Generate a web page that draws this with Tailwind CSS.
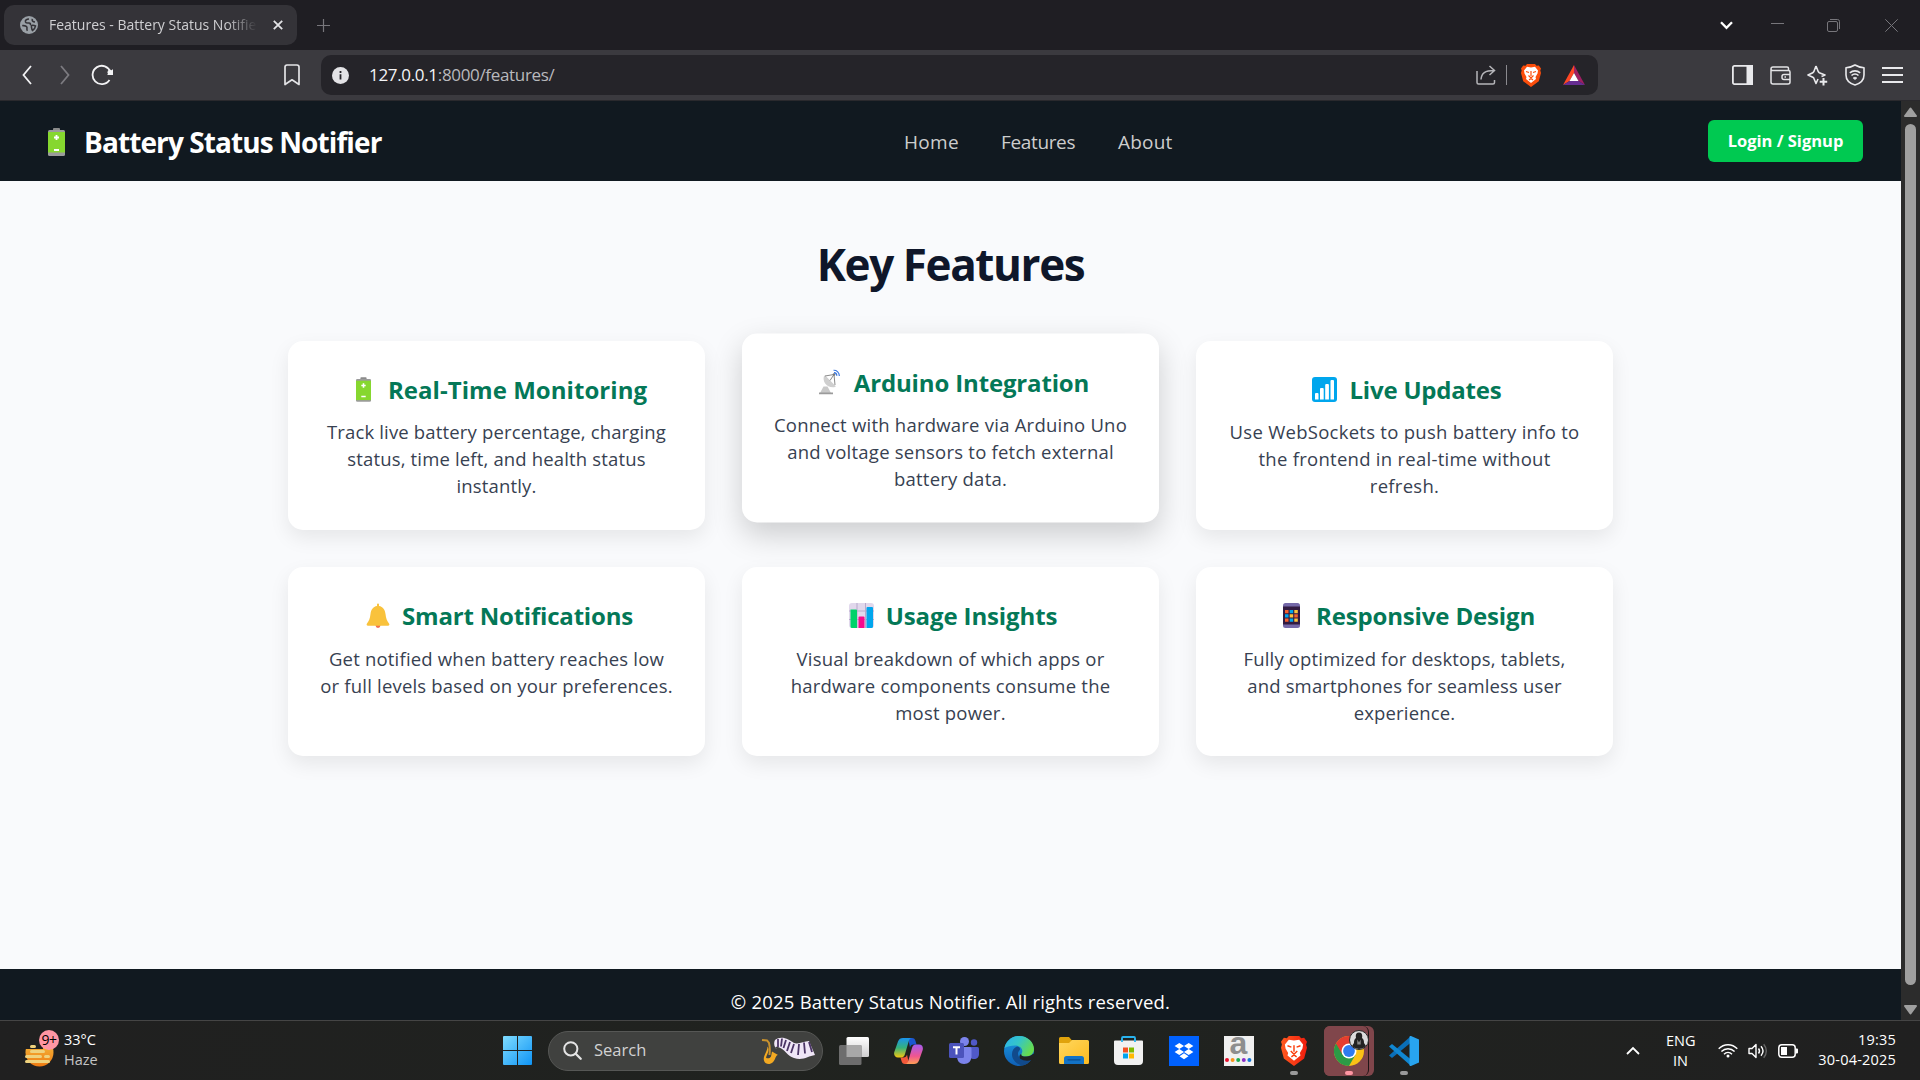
<!DOCTYPE html>
<html lang="en">
<head>
<meta charset="utf-8">
<title>Features - Battery Status Notifier</title>
<script src="https://cdn.jsdelivr.net/npm/@tailwindcss/browser@4"></script>
</head>
<body class="w-[1920px] h-[1080px] overflow-hidden bg-[#202020] font-['Open_Sans',sans-serif] flex flex-col">

<!-- Tab strip -->
<div class="h-[50px] shrink-0 bg-[#1f1e23] flex items-center">
  <div class="ml-1 w-[293px] h-10 rounded-[10px] bg-[#343338] flex items-center pl-4">
    <svg class="size-[18px] shrink-0" viewBox="0 0 18 18"><circle cx="9" cy="9" r="9" fill="#9aa0a6"/><path d="M9 3C6.500 3 5 4.500 5.500 6c.5 1.300 2 1 3.500 1s1.800 1 1 2M2.200 9.500c1.500.3 3.500 0 4.500 1.300 1 1.200-.7 2.500.8 4M12.500 3c-.8 1.500 0 2.800 2.500 3M11.500 9.500c1.500-.5 3 0 4 .5-.3 2-1.300 3.500-3 4.500-1-1-.5-2-1-3z" fill="none" stroke="#343338" stroke-width="1.600"/></svg>
    <div class="ml-[11px] mb-[2px] w-[208px] overflow-hidden whitespace-nowrap text-[14px] text-[#cfcfd2] [mask-image:linear-gradient(to_right,black_85%,transparent)]">Features - Battery Status Notifier</div>
    <svg class="ml-4 size-[10px]" viewBox="0 0 10 10"><path d="M.8.8l8.400 8.400M9.200.8L.8 9.200" stroke="#e3e3e6" stroke-width="1.800"/></svg>
  </div>
  <svg class="ml-5 size-[13px]" viewBox="0 0 13 13"><path d="M6.500 0v13M0 6.500h13" stroke="#77767b" stroke-width="1.200"/></svg>
  <svg class="ml-[1390px] w-[13px] h-[9px]" viewBox="0 0 13 9"><path d="M1 1.200l5.500 5.600L12 1.200" fill="none" stroke="#fff" stroke-width="2.300"/></svg>
  <div class="ml-[38px] mb-[3px] w-[13px] h-px bg-[#77767b]"></div>
  <svg class="ml-[43px] size-[13px]" viewBox="0 0 13 13" fill="none" stroke="#77767b"><rect x=".5" y="2.500" width="10" height="10" rx="1.500"/><path d="M3 .5h7.500a2 2 0 0 1 2 2V10"/></svg>
  <svg class="ml-[45px] size-[13px]" viewBox="0 0 13 13"><path d="M.3.3l12.400 12.400M12.700.3L.3 12.700" stroke="#77767b" stroke-width="1"/></svg>
</div>

<!-- Toolbar -->
<div class="h-[51px] shrink-0 bg-[#3b3a3f] border-b border-[#2a292d] flex items-center">
  <svg class="ml-[22px] w-[10px] h-[20px]" viewBox="0 0 10 20"><path d="M9 1L1.500 10 9 19" fill="none" stroke="#f2f2f4" stroke-width="1.800"/></svg>
  <svg class="ml-[28px] w-[10px] h-[20px]" viewBox="0 0 10 20"><path d="M1 1l7.500 9L1 19" fill="none" stroke="#7c7b80" stroke-width="1.800"/></svg>
  <svg class="ml-[21px] w-[23px] h-[22px]" viewBox="0 0 23 22"><path d="M19.500 8A9.200 9.200 0 1 0 18.500 16" fill="none" stroke="#f2f2f4" stroke-width="1.800"/><circle cx="19" cy="8.300" r="2.500" fill="#f2f2f4"/><path d="M22 5v6h-6z" fill="#f2f2f4"/></svg>
  <svg class="ml-[170px] w-[16px] h-[22px]" viewBox="0 0 16 22"><path d="M1 3.200A2 2 0 0 1 3 1h10a2 2 0 0 1 2 2.200V20.500l-7-4.700-7 4.700z" fill="none" stroke="#e3e3e6" stroke-width="1.700" stroke-linejoin="round"/></svg>
  <div class="ml-[21px] w-[1277px] h-10 rounded-[10px] bg-[#252429] flex items-center">
    <svg class="ml-[11px] size-[17px]" viewBox="0 0 17 17"><circle cx="8.500" cy="8.500" r="8.500" fill="#e3e3e6"/><path d="M8.500 7.200v5.300M8.500 4v1.900" stroke="#252429" stroke-width="1.800"/></svg>
    <div class="ml-5 w-[1107px] whitespace-nowrap text-[17px] tracking-[-0.33px] text-[#b9b9bd]"><span class="text-[#f4f4f6]">127.0.0.1</span>:8000/features/</div>
    <svg class="w-[20px] h-[20px]" viewBox="0 0 20 20" fill="none" stroke="#b5b5b9" stroke-width="1.500"><path d="M1 6v11.500a1.500 1.500 0 0 0 1.500 1.500H17a1.500 1.500 0 0 0 1.500-1.500V15M5 14.500C5.500 8 9 5.500 18 5.500M13.500 1L18.500 5.500 13.500 10"/></svg>
    <div class="ml-[10px] w-px h-5 bg-[#8b8a8f]"></div>
    <svg class="ml-[14px] w-[20px] h-[23px]" viewBox="0 0 20 23"><path d="M6 0h8l1.500 1.700 2.300-.3L20 4.500l-.7 2L20 9l-2.200 8.200L10 23l-7.800-5.800L0 9l.7-2.500L0 4.500l2.200-3.100 2.300.3z" fill="#fb4d0b"/><path d="M10 3.500l4-.7 3 3.700-.5 3-2 3.500.5 2L10 19l-5-4 .5-2-2-3.500-.5-3 3-3.700z" fill="#fff"/><path d="M5 7.500l3 1M15 7.500l-3 1M10 7v5M7.500 11.500L10 14l2.500-2.500M8 16l2-1.500 2 1.500" stroke="#fb4d0b" stroke-width="1.200" fill="none"/></svg>
    <svg class="ml-[22px] w-[22px] h-[20px]" viewBox="0 0 22 20"><path d="M11 0v8L6.500 16 0 20z" fill="#ff4724"/><path d="M11 0l11 20-6.500-4L11 8z" fill="#9e1f63"/><path d="M0 20l6.500-4h9l6.500 4z" fill="#662d91"/><path d="M11 8l4.500 8h-9z" fill="#fff"/></svg>
  </div>
  <svg class="ml-[134px] w-[21px] h-[20px]" viewBox="0 0 21 20"><rect x=".9" y=".9" width="19.200" height="18.200" rx="1.500" fill="none" stroke="#e9e9ec" stroke-width="1.800"/><path d="M14.500 0H21v20h-6.500z" fill="#e9e9ec"/></svg>
  <svg class="ml-[17px] w-[21px] h-[19px]" viewBox="0 0 21 19" fill="none" stroke="#e3e3e6" stroke-width="1.500"><path d="M1 3v13a2 2 0 0 0 2 2h15a2 2 0 0 0 2-2V6a1.500 1.500 0 0 0-1.500-1.500H2.500A1.500 1.500 0 0 1 1 3 2 2 0 0 1 3 1h14a1.500 1.500 0 0 1 1.500 1.500v2"/><path d="M20 8.500h-6a2 2 0 0 0-2 2v1a2 2 0 0 0 2 2h6M14.500 11h1.500"/></svg>
  <svg class="ml-[16px] w-[21px] h-[21px]" viewBox="0 0 21 21" fill="none" stroke="#e9e9ec" stroke-width="1.600" stroke-linejoin="round"><path d="M9 1l2.300 5.700a2 2 0 0 0 1 1L18 10l-3.500 1.500M9 1L6.800 6.700a2 2 0 0 1-1 1L1 10l4.800 2.200a2 2 0 0 1 1 1L9 18.500l2-4.500"/><path d="M16.500 13v7.500M12.700 16.800h7.500" stroke-width="2"/></svg>
  <svg class="ml-[17px] w-[20px] h-[22px]" viewBox="0 0 20 22" fill="none" stroke="#e9e9ec" stroke-width="1.600"><path d="M10 1c3 1.800 6 2.600 9 2.800V11c0 5-4 8.500-9 10-5-1.500-9-5-9-10V3.800C4 3.600 7 2.800 10 1z" stroke-linejoin="round"/><path d="M4.800 8.800c3-2.600 7.400-2.600 10.400 0M6.500 11.500c2-1.800 5-1.800 7 0"/><path d="M8.200 14c1-.9 2.600-.9 3.600 0L10 15.500z" fill="#e9e9ec" stroke-width=".8"/></svg>
  <svg class="ml-[17px] w-[21px] h-[16px]" viewBox="0 0 21 16"><path d="M0 1h21M0 8h21M0 15h21" stroke="#e9e9ec" stroke-width="1.800"/></svg>
</div>

<!-- Page -->
<div class="h-[919px] shrink-0 flex">
  <div class="w-[1901px] flex flex-col bg-[#f9fafc]">
    <header class="h-20 shrink-0 bg-[#111920] flex items-center">
      <svg class="ml-[48px] mt-[2px] w-[17px] h-[28px]" viewBox="0 0 17 28"><rect x="5" width="7" height="4" rx="1" fill="#8b8b8b"/><rect y="2" width="17" height="26" rx="1.500" fill="#9b9b9b"/><path d="M0 4h17v20.500H0z" fill="#86d72f"/><path d="M8.500 7v5M6 9.500h5M6 22h5" stroke="#fff" stroke-width="1.800"/></svg>
      <div class="ml-[19px] mt-[2px] w-[820px] whitespace-nowrap text-[28px] tracking-[-0.9px] font-bold text-white">Battery Status Notifier</div>
      <nav class="mt-[2px] w-[804px] flex text-[19px] text-[#cdcdcd]"><a class="w-[97px] tracking-[0.3px]">Home</a><a class="w-[117px] tracking-[-0.35px]">Features</a><a class="tracking-[0.2px]">About</a></nav>
      <a class="w-[155px] h-[42px] mb-px pt-[2px] rounded-md bg-[#00c951] text-white font-bold text-[16.5px] flex items-center justify-center whitespace-nowrap">Login / Signup</a>
    </header>

    <main class="h-[788px] shrink-0">
      <h1 class="mt-[53px] h-[60px] leading-[60px] text-center text-[44px] tracking-[-1.4px] font-bold text-[#0f172a]">Key Features</h1>
      <div class="mt-[47px] ml-[288px] grid grid-cols-[417px_417px_417px] grid-rows-[189px_189px] gap-[37px] text-center text-[18.5px] leading-[27px] text-[#374151]">
        <section class="rounded-[15px] bg-white shadow-[0_8px_20px_rgba(0,0,0,0.08)] pt-[30px]">
          <h2 class="flex justify-center items-center h-9 gap-[7px] text-[24px] tracking-[0.05px] font-bold text-[#047857]">
            <span class="w-[35px] flex justify-center"><svg class="w-[15px] h-[25px]" viewBox="0 0 17 28"><rect x="5" width="7" height="4" rx="1" fill="#8b8b8b"/><rect y="2" width="17" height="26" rx="1.500" fill="#9b9b9b"/><path d="M0 4h17v22H0z" fill="#86d72f"/><path d="M8.500 7v5M6 9.500h5M6 22h5" stroke="#fff" stroke-width="1.800"/></svg></span>Real-Time Monitoring</h2>
          <p class="mt-[11px] whitespace-nowrap tracking-[0.16px]">Track live battery percentage, charging<br>status, time left, and health status<br>instantly.</p>
        </section>
        <section class="-translate-y-[7.500px] rounded-[15px] bg-white shadow-[0_12px_30px_rgba(0,0,0,0.18)] pt-[30px]">
          <h2 class="flex justify-center items-center h-9 gap-[7px] text-[24px] tracking-[-0.15px] font-bold text-[#047857]">
            <span class="w-[35px] flex justify-center"><svg class="w-[21px] h-[25px]" viewBox="0 0 21 25"><path d="M1 23.500l3.500-6.500h4l3.500 6.500z" fill="#c9c9c9"/><path d="M0 23h14v2H0z" fill="#9b9b9b"/><path d="M5 6.500C3 12 8 19 16 17.500c.8-.3.800-.8.300-1.300L6.500 6.200C6 5.700 5.300 5.900 5 6.500z" fill="#cfcfcf"/><path d="M6 6.500l9-1.500 1 10.500M11 11l4-6" stroke="#8a8a8a" fill="none"/><circle cx="15" cy="5" r="1.300" fill="#777"/><path d="M15 3.200a3 3 0 0 1 2.800 3M14.500.7A5.500 5.500 0 0 1 20.300 6.500" stroke="#3b78e0" fill="none" stroke-width="1.200"/></svg></span>Arduino Integration</h2>
          <p class="mt-[11px] whitespace-nowrap tracking-[0.23px]">Connect with hardware via Arduino Uno<br>and voltage sensors to fetch external<br>battery data.</p>
        </section>
        <section class="rounded-[15px] bg-white shadow-[0_8px_20px_rgba(0,0,0,0.08)] pt-[30px]">
          <h2 class="flex justify-center items-center h-9 gap-[7px] text-[24px] tracking-[-0.2px] font-bold text-[#047857]">
            <span class="w-[35px] flex justify-center"><svg class="size-[25px]" viewBox="0 0 25 25"><rect width="25" height="25" rx="3" fill="#00a6ed"/><path d="M3 17a1 1 0 0 1 1-1h1.500a1 1 0 0 1 1 1v5.500H3zM8 12a1 1 0 0 1 1-1h1.700a1 1 0 0 1 1 1v10.500H8zM13.200 8a1 1 0 0 1 1-1h1.700a1 1 0 0 1 1 1v14.500h-3.700zM18.500 4a1 1 0 0 1 1-1H21a1 1 0 0 1 1 1v18.500h-3.500z" fill="#fff"/></svg></span>Live Updates</h2>
          <p class="mt-[11px] whitespace-nowrap tracking-[0.27px]">Use WebSockets to push battery info to<br>the frontend in real-time without<br>refresh.</p>
        </section>
        <section class="rounded-[15px] bg-white shadow-[0_8px_20px_rgba(0,0,0,0.08)] pt-[30px]">
          <h2 class="flex justify-center items-center h-9 gap-[7px] text-[24px] tracking-[-0.2px] font-bold text-[#047857]">
            <span class="w-[35px] flex justify-center"><svg class="w-[24px] h-[25px]" viewBox="0 0 24 25"><circle cx="12" cy="22.500" r="2.400" fill="#f3704f"/><path d="M11 1.500a1 1 0 0 1 2 0V3c4 .6 6 3.800 6.500 8 .5 4.500 1.500 7 3.500 9.500.8 1.200.3 2.300-1 2.300H2c-1.300 0-1.800-1.100-1-2.300 2-2.500 3-5 3.500-9.500C5 6.800 7 3.600 11 3z" fill="#f9c23c"/></svg></span>Smart Notifications</h2>
          <p class="mt-[12px] whitespace-nowrap tracking-[0.19px]">Get notified when battery reaches low<br>or full levels based on your preferences.</p>
        </section>
        <section class="rounded-[15px] bg-white shadow-[0_8px_20px_rgba(0,0,0,0.08)] pt-[30px]">
          <h2 class="flex justify-center items-center h-9 gap-[7px] text-[24px] tracking-[-0.12px] font-bold text-[#047857]">
            <span class="w-[35px] flex justify-center"><svg class="size-[25px]" viewBox="0 0 25 25"><rect width="25" height="25" rx="3" fill="#e1d8ec"/><path d="M8 0v25M16.500 0v25M0 8h25M0 16.500h25" stroke="#b8a9cc" stroke-width="1"/><path d="M1.500 6.500H7a1 1 0 0 1 1 1V25H3a1.500 1.500 0 0 1-1.500-1.500z" fill="#00d26a"/><path d="M10.500 13.500h4a1 1 0 0 1 1 1V25h-6V14.500a1 1 0 0 1 1-1z" fill="#f70a8d"/><path d="M18.500 4H23a1 1 0 0 1 1 1v18.500a1.500 1.500 0 0 1-1.500 1.500h-5V5a1 1 0 0 1 1-1z" fill="#00a6ed"/></svg></span>Usage Insights</h2>
          <p class="mt-[12px] whitespace-nowrap tracking-[0.22px]">Visual breakdown of which apps or<br>hardware components consume the<br>most power.</p>
        </section>
        <section class="rounded-[15px] bg-white shadow-[0_8px_20px_rgba(0,0,0,0.08)] pt-[30px]">
          <h2 class="flex justify-center items-center h-9 gap-[7px] text-[24px] tracking-[-0.15px] font-bold text-[#047857]">
            <span class="w-[35px] flex justify-center"><svg class="w-[17px] h-[25px]" viewBox="0 0 17 25"><rect width="17" height="25" rx="2.500" fill="#7468a8"/><path d="M0 3.500h17v18H0z" fill="#321b41"/><path d="M2 7h3.500v3.300H2zM2 15.500h3.500v3.300H2zM11.300 11.300h3.500v3.300h-3.500z" fill="#f8602d"/><path d="M6.700 7h3.500v3.300H6.700zM2 11.300h3.500v3.300H2zM6.700 15.500h3.500v3.300H6.700z" fill="#00a6ed"/><path d="M11.300 7h3.500v3.300h-3.500zM6.700 11.300h3.500v3.300H6.700zM11.300 15.500h3.500v3.300h-3.500z" fill="#fcc53c"/></svg></span>Responsive Design</h2>
          <p class="mt-[12px] whitespace-nowrap tracking-[0.16px]">Fully optimized for desktops, tablets,<br>and smartphones for seamless user<br>experience.</p>
        </section>
      </div>
    </main>

    <footer class="flex-1 bg-[#111920] text-white text-center text-[18.5px] tracking-[0.21px] leading-[66px] overflow-hidden">© 2025 Battery Status Notifier. All rights reserved.</footer>
  </div>
  <!-- Scrollbar -->
  <div class="w-[19px] bg-[#2c2c2c] flex flex-col items-center">
    <svg class="mt-[6px] w-[13px] h-[10px]" viewBox="0 0 13 10"><path d="M6.500 1.500L12 9H1z" fill="#9f9f9f" stroke="#9f9f9f" stroke-width="2" stroke-linejoin="round"/></svg>
    <div class="mt-[7px] w-[11px] h-[861px] rounded-full bg-[#9f9f9f]"></div>
    <svg class="mt-5 w-[13px] h-[10px]" viewBox="0 0 13 10"><path d="M6.500 8.500L12 1H1z" fill="#9f9f9f" stroke="#9f9f9f" stroke-width="2" stroke-linejoin="round"/></svg>
  </div>
</div>

<!-- Taskbar -->
<div class="h-[60px] shrink-0 border-t border-[#454545] bg-linear-to-r from-[#202020] via-[#20231f] to-[#202020] flex items-center text-white whitespace-nowrap">
  <div class="ml-[25px] w-[34px] h-9 relative">
    <svg class="w-[34px] h-9" viewBox="0 0 34 36"><defs><linearGradient id="sun" x1="0" y1="0" x2="0" y2="1"><stop offset="0" stop-color="#f6c443"/><stop offset="1" stop-color="#ee7a12"/></linearGradient></defs><circle cx="14.500" cy="19.500" r="14" fill="url(#sun)"/><path d="M0 3h18v13H0z" fill="#202020"/><path d="M6.500 13.500h3M6.500 18.500h12M1.500 23.500h14M20.500 23.500h3M1.500 28.500h22" stroke="#efd27d" stroke-width="3" stroke-linecap="round"/></svg>
    <div class="absolute left-[14px] -top-[3px] size-5 rounded-full bg-[#ff96a3] text-black text-[14px] leading-5 text-center tracking-[-0.5px]">9+</div>
  </div>
  <div class="ml-[5px] w-[422px] text-[14.5px] leading-5 pb-px"><div>33°C</div><div class="text-[#c4c4c4]">Haze</div></div>

  <svg class="ml-[17px] size-[29px]" viewBox="0 0 29 29"><defs><linearGradient id="win" x1="0" y1="0" x2="1" y2="1"><stop offset="0" stop-color="#7fdcff"/><stop offset="1" stop-color="#0f94f5"/></linearGradient></defs><path d="M1 0h13v14H0V1a1 1 0 0 1 1-1zM15 0h13a1 1 0 0 1 1 1v13H15zM0 15h14v14H1a1 1 0 0 1-1-1zM15 15h14v13a1 1 0 0 1-1 1H15z" fill="url(#win)"/></svg>

  <div class="ml-4 w-[275px] h-10 rounded-full bg-[#40413f] border border-[#565755] flex items-center">
    <svg class="ml-[14px] size-[19px]" viewBox="0 0 19 19"><circle cx="7.800" cy="7.800" r="6.600" fill="none" stroke="#e4e4e4" stroke-width="2"/><path d="M12.700 12.700l5 5" stroke="#e4e4e4" stroke-width="2.300" stroke-linecap="round"/></svg>
    <div class="ml-[12px] w-[167px] text-[16.500px] text-[#d2d2d2]">Search</div>
    <svg class="w-[56px] h-7" viewBox="0 0 56 28"><path d="M1 3l5 .5 2 2.500c1 4 1 8 .5 12" fill="none" stroke="#c9922e" stroke-width="2"/><path d="M6.500 9.500c2.500 3 0 7-1.500 11 1 1.500 4 1 5-1l1-5 6 3.500c-3 0-2.500 8-8.500 9-5 .5-7-4-5-8.500 1.500-3.500 3-6 3-9z" fill="#f3a922"/><path d="M14 3c6-5 14-1 19 3 4.500 1.500 10-1.500 15-2l6 14c-7 1-12 6-21 3-7-2-9-9-16-11-3-1-3 2-1 2-2-1-4-5-2-9z" fill="#efe6f7"/><path d="M17 2v8M21 1.500l-1 8M25 3l-2.500 8M29 5l-3 9M33 7l-3 9M38 7l-1 11M43 5.500l1 11M48 5l3 10" stroke="#4b3566" stroke-width="1.800"/></svg>
  </div>

  <div class="ml-[3px] flex items-center h-full">
    <div class="w-[55px] flex justify-center"><svg class="w-[30px] h-[28px]" viewBox="0 0 30 28"><defs><linearGradient id="tv" x1="0" y1="0" x2="0" y2="1"><stop offset="0" stop-color="#fff"/><stop offset="1" stop-color="#cfcfcf"/></linearGradient></defs><rect x="7.500" width="22.500" height="20" rx="1.500" fill="url(#tv)"/><rect y="8" width="22.500" height="20" rx="1.500" fill="#6d6d6d"/><path d="M7.500 8h15v12h-15z" fill="#a8a8a8"/></svg></div>
    <div class="w-[55px] flex justify-center"><svg class="w-[29px] h-[26px]" viewBox="0 0 29 26"><defs><linearGradient id="cp1" x1="0" y1="0" x2="0" y2="1"><stop offset="0" stop-color="#1a94ee"/><stop offset=".5" stop-color="#35b27c"/><stop offset="1" stop-color="#f5c80f"/></linearGradient><linearGradient id="cp2" x1="0" y1="0" x2="0" y2="1"><stop offset="0" stop-color="#a55bf0"/><stop offset=".6" stop-color="#f0568f"/><stop offset="1" stop-color="#ff9f55"/></linearGradient></defs><path d="M14 0h4c2 0 3 1 3.500 3l1 3.500h-3c-2 0-3 1-3.500 3z" fill="#1b57d0"/><path d="M15 26h-4c-2 0-3-1-3.500-3l-1-3.500h3c2 0 3-1 3.500-3z" fill="#f2593a"/><path d="M9 0h9c-2 0-2.800 1.500-3.500 4l-3.500 12c-.7 2.200-1.500 3.500-4 3.500H4C1 19.500-.5 17 .3 14L4 3.500C5 1 6.500 0 9 0z" fill="url(#cp1)"/><path d="M20 26h-9c2 0 2.800-1.500 3.500-4L18 10c.7-2.200 1.500-3.500 4-3.500h3c3 0 4.500 2.500 3.700 5.500L25 22.500c-1 2.500-2.500 3.500-5 3.500z" fill="url(#cp2)"/></svg></div>
    <div class="w-[55px] flex justify-center"><svg class="w-[30px] h-[27px]" viewBox="0 0 30 27"><circle cx="15.500" cy="4.500" r="4.500" fill="#7b83eb"/><circle cx="25" cy="5.500" r="3.200" fill="#5059c9"/><path d="M20 10h8.500a1.500 1.500 0 0 1 1.500 1.500V17c0 3-2 5-5 5s-5-2-5-5z" fill="#5059c9"/><path d="M8 10h13a1.500 1.500 0 0 1 1.500 1.500V19c0 5-3 8-7.500 8s-7-3-7-8z" fill="#7b83eb"/><rect y="6" width="15" height="15" rx="1.500" fill="#4b53bc"/><path d="M4 10.200h7M7.500 10.200v7.300" stroke="#fff" stroke-width="2"/></svg></div>
    <div class="w-[55px] flex justify-center"><svg class="size-[30px]" viewBox="0 0 30 30"><defs><linearGradient id="ed1" x1="0" y1="0" x2="1" y2=".5"><stop offset="0" stop-color="#2bb1ee"/><stop offset=".5" stop-color="#35c5c8"/><stop offset="1" stop-color="#66dc4e"/></linearGradient><linearGradient id="ed2" x1="0" y1="0" x2="0" y2="1"><stop offset="0" stop-color="#1b9de2"/><stop offset="1" stop-color="#0f5fb5"/></linearGradient></defs><circle cx="15" cy="15" r="15" fill="url(#ed2)"/><path d="M.5 12C2 5 8 0 15 0c9 0 15 6.500 15 13 0 5-4 7.500-8 7.500-4 0-5.500-1.200-4.500-2.700 2.500-4-1-8.300-6.500-8.300-4 0-8 1-10.500 2.500z" fill="url(#ed1)"/><path d="M13 10.500c-5 2-6.500 8-3.500 13 2 3.500 6 5.800 9.500 6 4-1 7-3.500 8.700-6.700-5 2.500-11 1.200-13-2.300-1.500-3-.5-4.500 1-6.500 1-1.500-.5-3.500-2.700-3.500z" fill="#114a8b"/><path d="M17.500 17.800c-1 1.500.5 2.700 4.500 2.700 3 0 5.500-1 7.500-3l1.500 2-3 4.500c-4.500 1.500-9 .7-11.800-1.200-1.500-2-.5-4 1.300-5z" fill="#202220"/></svg></div>
    <div class="w-[55px] flex justify-center"><svg class="w-[30px] h-[27px]" viewBox="0 0 30 27"><defs><linearGradient id="fo" x1="0" y1="0" x2="1" y2="1"><stop offset="0" stop-color="#ffd75e"/><stop offset="1" stop-color="#fdbb1f"/></linearGradient></defs><path d="M1.500 0H10l3 3.500V8H0V1.500A1.500 1.500 0 0 1 1.500 0z" fill="#e0a30c"/><path d="M0 6h10l3-3h15.500A1.500 1.500 0 0 1 30 4.500v21a1.500 1.500 0 0 1-1.500 1.500h-27A1.500 1.500 0 0 1 0 25.500z" fill="url(#fo)"/><path d="M5 21.500a2.500 2.500 0 0 1 2.500-2.500h15a2.500 2.500 0 0 1 2.500 2.500V27H5z" fill="#1373c6"/><path d="M9 22.800h12" stroke="#0b4f90" stroke-width="1.300" stroke-linecap="round"/></svg></div>
    <div class="w-[55px] flex justify-center"><svg class="w-[29px] h-[29px]" viewBox="0 0 29 29"><path d="M8 6V2a1 1 0 0 1 1-1h11a1 1 0 0 1 1 1v4" fill="none" stroke="#29b3ee" stroke-width="1.800"/><path d="M0 5.500A1 1 0 0 1 1 4.500h27a1 1 0 0 1 1 1V25a4 4 0 0 1-4 4H4a4 4 0 0 1-4-4z" fill="#f1f1f1"/><path d="M8 2.500V6M21 2.500V6" stroke="#29b3ee" stroke-width="1.800"/><path d="M9 11.500h5v5H9z" fill="#f25022"/><path d="M15 11.500h5v5h-5z" fill="#7fba00"/><path d="M9 17.500h5v5H9z" fill="#00a4ef"/><path d="M15 17.500h5v5h-5z" fill="#ffb900"/></svg></div>
    <div class="w-[55px] flex justify-center"><svg class="size-[30px]" viewBox="0 0 30 30"><path d="M0 0h30v30H0z" fill="#0061fe"/><path d="M10.300 7l4.700 3-4.700 3-4.700-3zM19.700 7l4.700 3-4.700 3-4.700-3zM10.300 13l4.700 3-4.700 3-4.700-3zM19.700 13l4.700 3-4.700 3-4.700-3zM15 17.300l4.500 3L15 23.200l-4.500-2.900z" fill="#fff"/></svg></div>
    <div class="w-[55px] flex justify-center"><div class="size-[30px] bg-[#f0f0f0] flex flex-col items-center"><div class="h-[22.500px] leading-[15px] text-[32px] font-bold text-[#8e8e8e] font-['Liberation_Sans',sans-serif]">a</div><svg class="w-[27px] h-1" viewBox="0 0 27 4"><circle cx="2" cy="2" r="2" fill="#e8112d"/><circle cx="7.600" cy="2" r="2" fill="#f7941d"/><circle cx="13.200" cy="2" r="2" fill="#1cab50"/><circle cx="18.800" cy="2" r="2" fill="#8a2fc9"/><circle cx="24.400" cy="2" r="2" fill="#1476d6"/></svg></div></div>
    <div class="w-[55px] h-[50px] relative flex justify-center items-center"><svg class="w-[26px] h-[30px]" viewBox="0 0 20 23" preserveAspectRatio="none"><defs><linearGradient id="br"><stop offset="0" stop-color="#ff5a1f"/><stop offset="1" stop-color="#f01c0d"/></linearGradient></defs><path d="M6 0h8l1.500 1.700 2.300-.3L20 4.500l-.7 2L20 9l-2.200 8.200L10 23l-7.800-5.800L0 9l.7-2.500L0 4.500l2.200-3.100 2.300.3z" fill="url(#br)"/><path d="M10 3.500l4-.7 3 3.700-.5 3-2 3.500.5 2L10 19l-5-4 .5-2-2-3.500-.5-3 3-3.700z" fill="#fff"/><path d="M5 7.500l3 1M15 7.500l-3 1M10 7v5M7.500 11.500L10 14l2.500-2.500M8 16l2-1.500 2 1.500" stroke="#fb3d0b" stroke-width="1.100" fill="none"/></svg><div class="absolute bottom-[1px] w-2 h-1 rounded-full bg-[#9a9a9a]"></div></div>
    <div class="w-[55px] h-[50px] relative flex justify-center items-center">
      <div class="absolute left-[2.500px] top-0 w-[50px] h-[50px] rounded-md bg-[#80464b]"></div>
      <div class="absolute left-[2.500px] top-0 w-[45px] h-[50px] rounded-md border-r border-[#1f1516] bg-[#80464b]"></div>
      <svg class="relative size-[30px]" viewBox="0 0 30 30"><circle cx="15" cy="15" r="15" fill="#fbc116"/><path d="M15 15L2 7.500A15 15 0 0 0 15 30l6.500-11.200z" fill="#2c9a46"/><path d="M15 15V7.500h13A15 15 0 0 0 2 7.500l6.500 11.300z" fill="#e53d30"/><circle cx="15" cy="15" r="7.500" fill="#fff"/><circle cx="15" cy="15" r="5.900" fill="#2f7bf0"/></svg>
      <svg class="absolute left-[28px] top-[4px] size-5" viewBox="0 0 20 20"><circle cx="10" cy="10" r="9.500" fill="#dcdcdc" stroke="#2a2a2a"/><path d="M10 2.500c3.300 0 3.500 3 3 5.500 1.800 1.200 2 3 2 5l2 3A9.500 9.500 0 0 1 3 16l2-3c0-2 .2-3.800 2-5-.5-2.500-.3-5.500 3-5.500z" fill="#222"/><path d="M8.300 9.500l1.700 3 1.700-3v5H8.300z" fill="#8a8a8a"/></svg>
      <div class="absolute bottom-[1px] w-2 h-1 rounded-full bg-[#ff96a3]"></div>
    </div>
    <div class="w-[55px] h-[50px] relative flex justify-center items-center"><svg class="size-[30px]" viewBox="0 0 30 30"><path d="M0 19.500L3 22l19-15.500V0z" fill="#0a6fb8"/><path d="M0 10.500L3 8l19 15.500V30z" fill="#1087d2"/><path d="M22 0l8 3.500v23L22 30c-1 .3-1.500-.3-1.500-1V1c0-.8.600-1.300 1.500-1z" fill="#28a4ef"/></svg><div class="absolute bottom-[1px] w-2 h-1 rounded-full bg-[#9a9a9a]"></div></div>
  </div>

  <svg class="ml-[195px] w-[14px] h-[9px]" viewBox="0 0 14 9"><path d="M1 8l6-6 6 6" fill="none" stroke="#fff" stroke-width="1.800"/></svg>
  <div class="ml-[26px] w-[29px] text-center text-[14.500px] leading-5 pt-px">ENG<br>IN</div>
  <svg class="ml-[23px] w-[20px] h-[15px]" viewBox="0 0 20 15" fill="none" stroke="#fff" stroke-width="1.400"><path d="M.7 5.800c5.200-5.400 13.400-5.400 18.600 0M3.400 8.600c3.700-3.900 9.500-3.900 13.200 0M6 11.200c2.300-2.400 5.700-2.400 8 0"/><circle cx="10" cy="13" r="1.500" fill="#fff" stroke="none"/></svg>
  <svg class="ml-[10px] w-[20px] h-[16px]" viewBox="0 0 20 16" fill="none" stroke="#fff" stroke-width="1.400"><path d="M1 5.500h3L8 1.500v13l-4-4H1z" stroke-linejoin="round"/><path d="M10.500 5.500c1.200 1.500 1.200 3.500 0 5M13 3.300c2.400 2.800 2.400 6.600 0 9.400"/><path d="M15.700 1.300c3.500 4 3.500 9.400 0 13.400" stroke="#666"/></svg>
  <svg class="ml-[10px] w-[20px] h-[14px]" viewBox="0 0 20 14"><rect x=".8" y=".8" width="16.400" height="12.400" rx="3" fill="none" stroke="#fff" stroke-width="1.500"/><path d="M3 3h6v8H3zM18 4.500h1a1 1 0 0 1 1 1v3a1 1 0 0 1-1 1h-1z" fill="#fff"/></svg>
  <div class="ml-[19px] w-[79px] text-right text-[14.500px] tracking-[0.2px] leading-5 pb-px">19:35<br>30-04-2025</div>
</div>
</body>
</html>
